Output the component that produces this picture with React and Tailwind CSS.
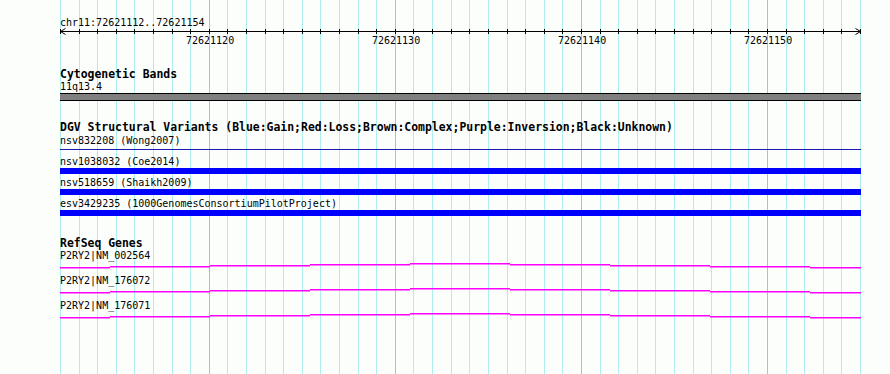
const MONO = "font-['DejaVu_Sans_Mono',monospace]";

// 43 bp over 800 px, starting at 72621112
const BASES = 43;
const px = (i) => Math.round((i * 800) / BASES);
const ticks = Array.from({ length: BASES + 1 }, (_, i) => i);
const majors = [8, 18, 28, 38];

const variants = [
  { label: 'nsv832208 (Wong2007)', thin: true },
  { label: 'nsv1038032 (Coe2014)' },
  { label: 'nsv518659 (Shaikh2009)' },
  { label: 'esv3429235 (1000GenomesConsortiumPilotProject)' },
];

const genes = ['P2RY2|NM_002564', 'P2RY2|NM_176072', 'P2RY2|NM_176071'];

// gene line is drawn in 100px steps, bowed up in the middle
const steps = [0, 50, 150, 250, 350, 450, 550, 650, 750, 801];
const offsets = [6, 5, 4, 3, 2, 3, 4, 5, 6];

const Grid = () => (
  <svg className="absolute top-0 left-[60px]" width="801" height="374" shapeRendering="crispEdges">
    {ticks.map((i) => (
      <rect
        key={i}
        x={px(i)}
        y="0"
        width="1"
        height="374"
        fill={(i + 2) % 10 === 0 ? '#8ecae6' : '#aeeeee'}
      />
    ))}
  </svg>
);

const Ruler = () => (
  <div className="relative h-[20px]">
    <svg className="block" width="801" height="8" shapeRendering="crispEdges">
      <rect x="0" y="3" width="801" height="1" fill="#000" />
      {ticks.map((i) => (
        <rect key={i} x={px(i)} y="1" width="1" height="5" fill="#000" />
      ))}
      <polyline points="5.5,0.5 0.5,3.5 5.5,6.5" fill="none" stroke="#000" strokeWidth="1" shapeRendering="auto" />
      <polyline points="795.5,0.5 800.5,3.5 795.5,6.5" fill="none" stroke="#000" strokeWidth="1" shapeRendering="auto" />
    </svg>
    {majors.map((i) => (
      <span
        key={i}
        className="absolute top-[7px] w-[48px] text-center text-[10px] leading-[12px]"
        style={{ left: px(i) - 23 }}
      >
        {72621112 + i}
      </span>
    ))}
  </div>
);

const GeneLine = () => (
  <svg className="block" width="801" height="12">
    {offsets.map((off, k) => (
      <rect
        key={k}
        x={steps[k]}
        y={off - 1}
        width={steps[k + 1] - steps[k]}
        height="1.5"
        fill="#ff00ff"
      />
    ))}
  </svg>
);

const App = () => {
  return (
    <div className={`relative w-[890px] h-[374px] overflow-hidden bg-[#fcfefc] text-black ${MONO}`}>
      <Grid />

      <div className="relative pl-[60px] w-[861px]">
        <div className="pt-[17px] text-[10px] leading-[11px]">chr11:72621112..72621154</div>
        <Ruler />

        <div className="mt-[20px] text-[11.45px] leading-[13px] font-bold">Cytogenetic Bands</div>
        <div className="text-[10px] leading-[11px]">11q13.4</div>
        <div className="mt-[1px] h-[8px] border-y border-black bg-[#808080]" />

        <div className="mt-[20px] text-[11.45px] leading-[13px] font-bold">
          DGV Structural Variants (Blue:Gain;Red:Loss;Brown:Complex;Purple:Inversion;Black:Unknown)
        </div>
        {variants.map((v) => (
          <div key={v.label} className="h-[21px]">
            <div className="pt-[1px] text-[10px] leading-[12px]">{v.label}</div>
            {v.thin ? (
              <div className="mt-[2px] h-[1px] bg-[#1c1cb4]" />
            ) : (
              <div className="h-[6px] bg-[#0000ff]" />
            )}
          </div>
        ))}

        <div className="mt-[19px] text-[11.45px] leading-[12px] font-bold">RefSeq Genes</div>
        {genes.map((g) => (
          <div key={g} className="h-[25px]">
            <div className="pt-[1px] text-[10px] leading-[12px]">{g}</div>
            <GeneLine />
          </div>
        ))}
      </div>
    </div>
  );
};

export default App;
